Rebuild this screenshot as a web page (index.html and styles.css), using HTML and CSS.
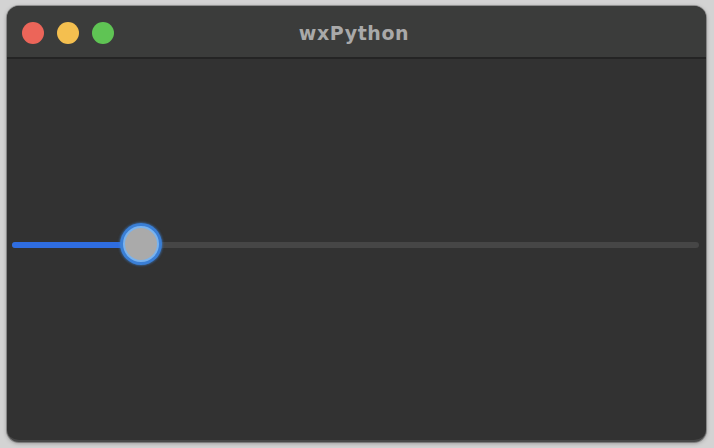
FILE: index.html
```html
<!DOCTYPE html>
<html>
<head>
<meta charset="utf-8">
<link rel="stylesheet" href="styles.css">
</head>
<body>
<div class="window">
  <div class="titlebar">
    <div class="lights">
      <span class="light red"></span>
      <span class="light yellow"></span>
      <span class="light green"></span>
    </div>
    <div class="title">wxPython</div>
  </div>
  <div class="content">
    <div class="slider">
      <div class="track">
        <div class="fill"></div>
        <div class="thumb"></div>
      </div>
    </div>
  </div>
</div>
</body>
</html>
```
FILE: styles.css
```css
html, body {
  margin: 0;
  padding: 0;
}
body {
  width: 714px;
  height: 448px;
  background: #d3d3d3;
  padding: 6px 8px 6px 7px;
  box-sizing: border-box;
  font-family: "Liberation Sans", Arial, sans-serif;
}
.window {
  width: 699px;
  height: 436px;
  border-radius: 12px;
  overflow: hidden;
  background: #323232;
  display: flex;
  flex-direction: column;
  box-shadow: 0 1px 4px rgba(0,0,0,0.35), 0 0 0 1px rgba(0,0,0,0.25);
  border-bottom: 2px solid #474747;
  box-sizing: border-box;
}
.titlebar {
  height: 51px;
  flex: none;
  background: #3b3c3b;
  border-bottom: 2px solid #242424;
  position: relative;
  display: flex;
  align-items: center;
  justify-content: center;
}
.lights {
  position: absolute;
  left: 15px;
  top: 16px;
  display: flex;
  gap: 13px;
}
.light {
  width: 22px;
  height: 22px;
  border-radius: 50%;
  display: block;
}
.red { background: #ec6559; }
.yellow { background: #f4bf4f; }
.green { background: #5fc454; }
.title {
  color: #a9a9a9;
  font-family: "DejaVu Sans", sans-serif;
  font-weight: bold;
  font-size: 19px;
  letter-spacing: 0.6px;
  margin-left: -5px;
  margin-top: 2px;
}
.content {
  flex: 1;
  display: flex;
  flex-direction: column;
  justify-content: flex-start;
  padding: 183px 7px 0 5px;
}
.track {
  height: 6px;
  border-radius: 3px;
  background: #464646;
  position: relative;
}
.fill {
  width: 125px;
  height: 6px;
  border-radius: 3px;
  background: #2f6de0;
}
.thumb {
  position: absolute;
  left: 111px;
  top: -16px;
  width: 32px;
  height: 32px;
  border-radius: 50%;
  background: #aaaaaa;
  border: 2px solid #7ab3ee;
  box-shadow: 0 0 0 3px #3a7fd6, 0 0 2px 4px rgba(58,127,214,0.5);
}
```
